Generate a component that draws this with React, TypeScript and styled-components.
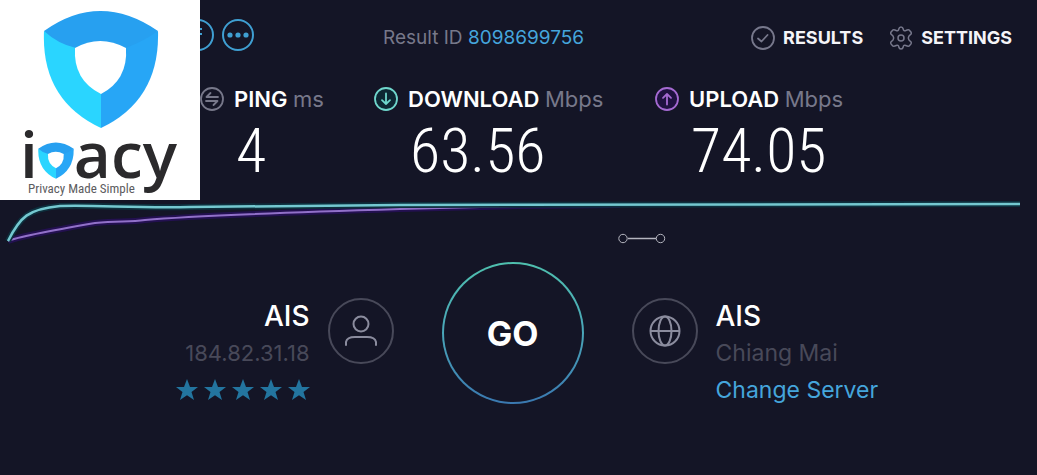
import React from "react";
import styled, { createGlobalStyle } from "styled-components";

const GlobalStyle = createGlobalStyle`
  *, *::before, *::after { box-sizing: border-box; }
  body {
    margin: 0;
    background: #141526;
    color: #ffffff;
    font-family: Inter, "Liberation Sans", sans-serif;
  }
`;

const Page = styled.main`
  position: relative;
  min-height: 100vh;
  overflow: hidden;
`;

/* Brand card, floats over the top left corner */
const BrandCard = styled.aside`
  position: absolute;
  top: 0;
  left: 0;
  z-index: 1;
  width: 200px;
  height: 200px;
  padding-top: 10px;
  background: #ffffff;
  color: #2b2a2c;
`;

const BrandShield = styled.svg`
  display: block;
  width: 116px;
  height: 118px;
  margin-left: 43px;
`;

const Wordmark = styled.div`
  display: flex;
  align-items: flex-start;
  height: 54px;
  padding-left: 20px;
  font-family: "Open Sans", "Noto Sans", sans-serif;
  font-size: 64px;
  font-weight: 600;
  line-height: 52px;
`;

const WordmarkShield = styled.svg`
  flex: none;
  width: 36px;
  height: 37px;
  margin-top: 14px;
`;

const Tagline = styled.div`
  padding-left: 28px;
  color: #5c5c60;
  font-family: "Roboto Condensed", "Liberation Sans Narrow", "Liberation Sans", sans-serif;
  font-size: 13px;
  line-height: 14px;
  white-space: nowrap;
`;

const Header = styled.header`
  display: flex;
  align-items: center;
  height: 76px;
  padding: 0 25px 0 182px;
`;

const ShareButtons = styled.div`
  display: flex;
  gap: 8px;
  padding-bottom: 6px;
`;

const IconButton = styled.button`
  display: block;
  width: 32px;
  height: 32px;
  padding: 0;
  border: 0;
  background: none;
  color: #3f9fd2;
  cursor: pointer;

  svg { display: block; }
`;

const ResultId = styled.p`
  margin: 0 0 0 129px;
  color: #77788a;
  font-size: 19px;
  line-height: 24px;
  white-space: nowrap;
`;

const TextLink = styled.a`
  color: #45a5dc;
  text-decoration: none;
`;

const Nav = styled.nav`
  display: flex;
  gap: 26px;
  margin-left: auto;
`;

const NavLink = styled.a`
  display: flex;
  align-items: center;
  gap: 8px;
  color: #f4f4f8;
  font-size: 18px;
  font-weight: 700;
  line-height: 26px;
  text-decoration: none;

  svg { color: #77788c; }
`;

const Stats = styled.section`
  display: grid;
  grid-template-columns: 174fr 281fr 382fr;
  height: 122px;
  padding: 8px 0 0 200px;
`;

const StatLabel = styled.h2`
  display: flex;
  align-items: center;
  gap: 10px;
  margin: 0;
  font-size: 22px;
  font-weight: 600;
  line-height: 30px;
  white-space: nowrap;
`;

const Unit = styled.span`
  color: #77788a;
  font-weight: 400;
`;

const StatValue = styled.p`
  margin: 0;
  padding-left: 36px;
  font-family: "Roboto Condensed", "Liberation Sans Narrow", Roboto, sans-serif;
  font-size: 62px;
  font-weight: 300;
  line-height: 74px;
`;

const Chart = styled.svg`
  display: block;
  width: 100%;
  height: 52px;
`;

const Connection = styled.section`
  display: flex;
  align-items: flex-start;
  justify-content: center;
  gap: 48px;
  padding: 12px 12px 0 0;
`;

const Side = styled.div<{ $reverse?: boolean }>`
  display: flex;
  flex: 1;
  flex-direction: ${(p) => (p.$reverse ? "row-reverse" : "row")};
  align-items: flex-start;
  gap: 18px;
  padding-top: 36px;
  text-align: ${(p) => (p.$reverse ? "right" : "left")};
`;

const RoundIcon = styled.div`
  display: grid;
  flex: none;
  place-items: center;
  width: 66px;
  height: 66px;
  border: 2px solid #484959;
  border-radius: 50%;
  color: #8b8c9e;
`;

const Details = styled.div`
  font-size: 23px;
  line-height: 37px;
`;

const HostName = styled.h3`
  margin: 0;
  font-size: 28px;
  font-weight: 500;
  line-height: 37px;
`;

const Place = styled.div`
  color: #484959;
`;

const Address = styled(Place)`
  font-size: 22px;
`;

const Stars = styled.div`
  display: flex;
  gap: 6px;
  justify-content: flex-end;
  align-items: center;
  height: 36px;
`;

const GoButton = styled.button`
  display: grid;
  flex: none;
  place-items: center;
  width: 142px;
  height: 142px;
  padding: 0;
  border: 2px solid transparent;
  border-radius: 50%;
  background: linear-gradient(#141526, #141526) padding-box,
    linear-gradient(#4fc0ae, #4aa6b9 50%, #3a78b0) border-box;
  color: #ffffff;
  font-family: inherit;
  font-size: 34px;
  font-weight: 700;
  cursor: pointer;
`;

function ShieldShape() {
  return (
    <>
      <path d="M115 21L83 32L57 60L58 118Q117 90 115 21Z" fill="#27a6f6" />
      <path d="M1 21L33 32L58 60L58 118Q-2 90 1 21Z" fill="#2ad5ff" />
      <path d="M1 21Q57-19 115 21Q101 31 83 38L58 44L33 38Q15 34 1 21Z" fill="#27a0f0" />
      <path d="M32 38Q57 24 83 38Q85 70 58 84Q30 70 32 38Z" fill="#ffffff" />
    </>
  );
}

function CircleIcon({ children, fill = "none" }: { children: React.ReactNode; fill?: string }) {
  return (
    <svg width="24" height="24" viewBox="0 0 24 24" fill="none" stroke="currentColor" strokeWidth="1.8" strokeLinecap="round" strokeLinejoin="round" aria-hidden="true">
      <circle cx="12" cy="12" r="11" fill={fill} />
      {children}
    </svg>
  );
}

const Tint = styled.span<{ $color: string }>`
  display: flex;
  color: ${(p) => p.$color};
`;

function Star() {
  return (
    <svg width="22" height="22" viewBox="0 0 22 22" fill="#23759f" aria-hidden="true">
      <path d="M11 0L14 8H22L15.500 13L18 21L11 16.200L4 21L6.500 13L0 8H8Z" />
    </svg>
  );
}

export default function App() {
  return (
    <>
      <GlobalStyle />
      <Page>
        <BrandCard>
          <BrandShield viewBox="0 0 116 118" aria-hidden="true">
            <ShieldShape />
          </BrandShield>
          <Wordmark>
            <span>i</span>
            <WordmarkShield viewBox="0 0 116 118" aria-hidden="true">
              <ShieldShape />
            </WordmarkShield>
            <span>acy</span>
          </Wordmark>
          <Tagline>Privacy Made Simple</Tagline>
        </BrandCard>

        <Header>
          <ShareButtons>
            <IconButton aria-label="Share on Facebook">
              <svg width="32" height="32" viewBox="0 0 32 32" fill="none" stroke="currentColor" strokeWidth="2">
                <circle cx="16" cy="16" r="15" />
                <path d="M20 10H18Q15 10 15 14V23M12 15H20" />
              </svg>
            </IconButton>
            <IconButton aria-label="More sharing options">
              <svg width="32" height="32" viewBox="0 0 32 32" fill="none" stroke="currentColor" strokeWidth="2">
                <circle cx="16" cy="16" r="15" />
                <g fill="currentColor" stroke="none">
                  <circle cx="8" cy="16" r="2.600" />
                  <circle cx="16" cy="16" r="2.600" />
                  <circle cx="24" cy="16" r="2.600" />
                </g>
              </svg>
            </IconButton>
          </ShareButtons>
          <ResultId>
            Result ID <TextLink href="#result">8098699756</TextLink>
          </ResultId>
          <Nav>
            <NavLink href="#results">
              <CircleIcon>
                <path d="M7 12.500L10.500 15.500L16.500 9" />
              </CircleIcon>
              RESULTS
            </NavLink>
            <NavLink href="#settings">
              <svg width="24" height="24" viewBox="0 0 24 24" fill="none" stroke="currentColor" strokeWidth="1.500" strokeLinejoin="round" aria-hidden="true">
                <path d="M9.800 3Q10.200 1 12 1T14.200 3Q14.600 5.300 16.800 4.500Q19.500 3.200 20.500 4.300Q22.800 6.200 22.300 7.700Q21 9 19.800 10.300Q18.800 12 19.800 13.700Q21 15 22.300 16.300Q22.800 17.800 20.500 19.700Q19.500 20.800 16.800 19.500Q14.600 18.700 14.200 21Q13.800 23 12 23T9.800 21Q9.400 18.700 7.200 19.500Q4.500 20.800 3.500 19.700Q1.200 17.800 1.700 16.300Q3 15 4.200 13.700Q5.200 12 4.200 10.300Q3 9 1.700 7.700Q1.200 6.200 3.500 4.300Q4.500 3.200 7.200 4.500Q9.400 5.300 9.800 3Z" />
                <circle cx="12" cy="12" r="3" />
              </svg>
              SETTINGS
            </NavLink>
          </Nav>
        </Header>

        <Stats>
          <div>
            <StatLabel>
              <Tint $color="#77788a">
                <CircleIcon>
                  <path d="M18 10H6.500L10.500 6M6 14H17.500L13.500 18" />
                </CircleIcon>
              </Tint>
              <span>PING <Unit>ms</Unit></span>
            </StatLabel>
            <StatValue>4</StatValue>
          </div>
          <div>
            <StatLabel>
              <Tint $color="#6fd6cc">
                <CircleIcon fill="#0d2733">
                  <path d="M12 6.500V17M8 13.200L12 17L16 13.200" />
                </CircleIcon>
              </Tint>
              <span>DOWNLOAD <Unit>Mbps</Unit></span>
            </StatLabel>
            <StatValue>63.56</StatValue>
          </div>
          <div>
            <StatLabel>
              <Tint $color="#a56ad2">
                <CircleIcon fill="#1f1240">
                  <path d="M12 17.500V7M8 10.800L12 7L16 10.800" />
                </CircleIcon>
              </Tint>
              <span>UPLOAD <Unit>Mbps</Unit></span>
            </StatLabel>
            <StatValue>74.05</StatValue>
          </div>
        </Stats>

        <Chart viewBox="0 198 1037 52" preserveAspectRatio="none" fill="none" aria-hidden="true">
          <path d="M8 241C20 236 60 229 95 223C120 221 130 222 145 220C200 215 300 212 400 209L520 206L620 205" stroke="#231050" strokeWidth="6" />
          <path d="M8 241C20 236 60 229 95 223C120 221 130 222 145 220C200 215 300 212 400 209L520 206L620 205" stroke="#9170c8" strokeWidth="2" />
          <path d="M8 241C20 217 28 209 60 206C100 205 130 208 190 207L400 205L1020 204" stroke="#0d2f3d" strokeWidth="6" />
          <path d="M8 241C20 217 28 209 60 206C100 205 130 208 190 207L400 205L1020 204" stroke="#74c8d0" strokeWidth="2.500" />
          <g stroke="#b4b5bf" strokeWidth="1">
            <circle cx="623" cy="238.500" r="4.200" />
            <circle cx="660.500" cy="238.500" r="4.200" />
            <path d="M628 238.500H656" strokeWidth="1.500" />
          </g>
        </Chart>

        <Connection>
          <Side $reverse>
            <RoundIcon>
              <svg width="32" height="32" viewBox="0 0 32 32" fill="none" stroke="currentColor" strokeWidth="2" strokeLinecap="round" aria-hidden="true">
                <circle cx="16" cy="9" r="7.500" />
                <path d="M1 30V27Q2 22 10 22H22Q30 22 31 27V30" />
              </svg>
            </RoundIcon>
            <Details>
              <HostName>AIS</HostName>
              <Address>184.82.31.18</Address>
              <Stars role="img" aria-label="5 out of 5 stars">
                <Star />
                <Star />
                <Star />
                <Star />
                <Star />
              </Stars>
            </Details>
          </Side>
          <GoButton>GO</GoButton>
          <Side>
            <RoundIcon>
              <svg width="32" height="32" viewBox="0 0 32 32" fill="none" stroke="currentColor" strokeWidth="2" aria-hidden="true">
                <circle cx="16" cy="16" r="14.500" />
                <ellipse cx="16" cy="16" rx="6.500" ry="14.500" />
                <path d="M2 16H30" />
              </svg>
            </RoundIcon>
            <Details>
              <HostName>AIS</HostName>
              <Place>Chiang Mai</Place>
              <TextLink href="#servers">Change Server</TextLink>
            </Details>
          </Side>
        </Connection>
      </Page>
    </>
  );
}
